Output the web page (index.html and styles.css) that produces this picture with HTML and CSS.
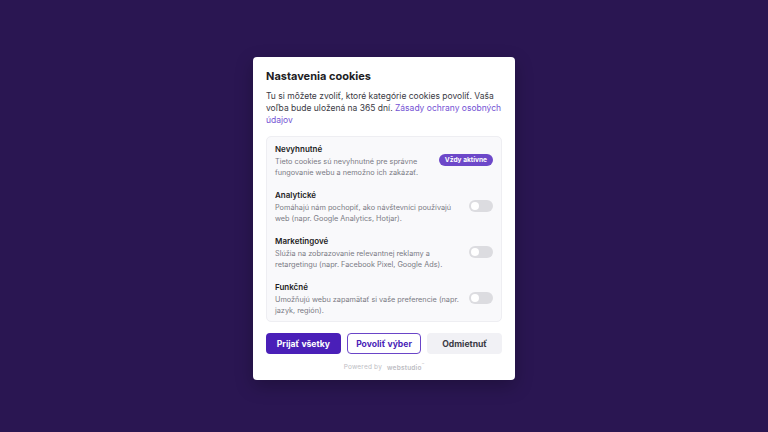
FILE: index.html
```html
<!DOCTYPE html>
<html lang="sk">
<head>
    <meta charset="UTF-8">
    <meta name="viewport" content="width=device-width, initial-scale=1.0">
    <title>Nastavenia cookies</title>
    <link rel="stylesheet" href="styles.css">
</head>
<body>

<div class="modal">
    <h2 class="title">Nastavenia cookies</h2>
    <p class="intro">Tu si môžete zvoliť, ktoré kategórie cookies povoliť. Vaša voľba bude uložená na 365 dní. <a href="#" class="link">Zásady ochrany osobných údajov</a></p>

    <div class="categories">
        <div class="category">
            <div class="info">
                <div class="name">Nevyhnutné</div>
                <div class="desc">Tieto cookies sú nevyhnutné pre správne fungovanie webu a nemožno ich zakázať.</div>
            </div>
            <span class="badge">Vždy aktívne</span>
        </div>
        <div class="category">
            <div class="info">
                <div class="name">Analytické</div>
                <div class="desc">Pomáhajú nám pochopiť, ako návštevníci používajú web (napr. Google Analytics, Hotjar).</div>
            </div>
            <span class="toggle"></span>
        </div>
        <div class="category">
            <div class="info">
                <div class="name">Marketingové</div>
                <div class="desc">Slúžia na zobrazovanie relevantnej reklamy a retargetingu (napr. Facebook Pixel, Google Ads).</div>
            </div>
            <span class="toggle"></span>
        </div>
        <div class="category">
            <div class="info">
                <div class="name">Funkčné</div>
                <div class="desc">Umožňujú webu zapamätať si vaše preferencie (napr. jazyk, región).</div>
            </div>
            <span class="toggle"></span>
        </div>
    </div>

    <div class="actions">
        <button class="btn primary">Prijať všetky</button>
        <button class="btn outline">Povoliť výber</button>
        <button class="btn plain">Odmietnuť</button>
    </div>

    <div class="powered">Powered by <span class="brand">webstudio</span><sup>™</sup></div>
</div>

</body>
</html>
```

FILE: styles.css
```css
body {
    font-family: 'Inter', 'Noto Sans', sans-serif;
    display: flex;
    justify-content: center;
    align-items: center;
    height: 100vh;
    margin: 0;
    background-color: #2a1652;
}

.modal {
    width: 236px;
    background-color: #fff;
    padding: 11px 13px 7px;
    border-radius: 4px;
    box-shadow: 0 6px 18px rgba(0, 0, 0, 0.25);
    margin-top: 5px;
}

.title {
    margin: 0;
    font-size: 11px;
    line-height: 16px;
    font-weight: 700;
    color: #1d1d24;
}

.intro {
    margin: 6px 0 0;
    font-size: 8.5px;
    line-height: 12px;
    color: #3a3a44;
}

.link {
    color: #7352d4;
    text-decoration: none;
}

.categories {
    margin-top: 10px;
    background-color: #f9f9fb;
    border: 1px solid #eeeef2;
    border-radius: 5px;
}

.category {
    display: flex;
    align-items: center;
    gap: 8px;
    padding: 5.5px 8px;
}

.info {
    flex: 1;
}

.name {
    font-size: 8px;
    line-height: 12px;
    font-weight: 600;
    color: #1d1d24;
}

.desc {
    margin-top: 1px;
    font-size: 7.3px;
    line-height: 11px;
    color: #7a7a84;
}

.badge {
    background-color: #6d48c9;
    color: #fff;
    font-size: 6.6px;
    font-weight: 700;
    padding: 2px 6px;
    border-radius: 8px;
    white-space: nowrap;
}

.toggle {
    position: relative;
    width: 24px;
    height: 12px;
    border-radius: 6px;
    background-color: #dcdce0;
    flex-shrink: 0;
}

.toggle::after {
    content: '';
    position: absolute;
    left: 2px;
    top: 2px;
    width: 8px;
    height: 8px;
    border-radius: 50%;
    background-color: #fff;
}

.actions {
    display: flex;
    gap: 6px;
    margin-top: 11px;
}

.btn {
    flex: 1;
    height: 21px;
    font-family: inherit;
    font-size: 8.6px;
    font-weight: 700;
    border-radius: 4px;
    border: 1px solid transparent;
    cursor: pointer;
    padding: 0;
}

.btn.primary {
    background-color: #4a1fb8;
    color: #fff;
}

.btn.outline {
    background-color: #fff;
    border-color: #6a45c8;
    color: #4a1fb8;
}

.btn.plain {
    background-color: #f1f1f5;
    color: #3a3a44;
}

.powered {
    margin-top: 6px;
    text-align: center;
    font-size: 6.5px;
    line-height: 10px;
    color: #bdbdc3;
    letter-spacing: 0.2px;
}

.powered .brand {
    margin-left: 3px;
    font-weight: 600;
}

.powered sup {
    font-size: 4px;
}
```
